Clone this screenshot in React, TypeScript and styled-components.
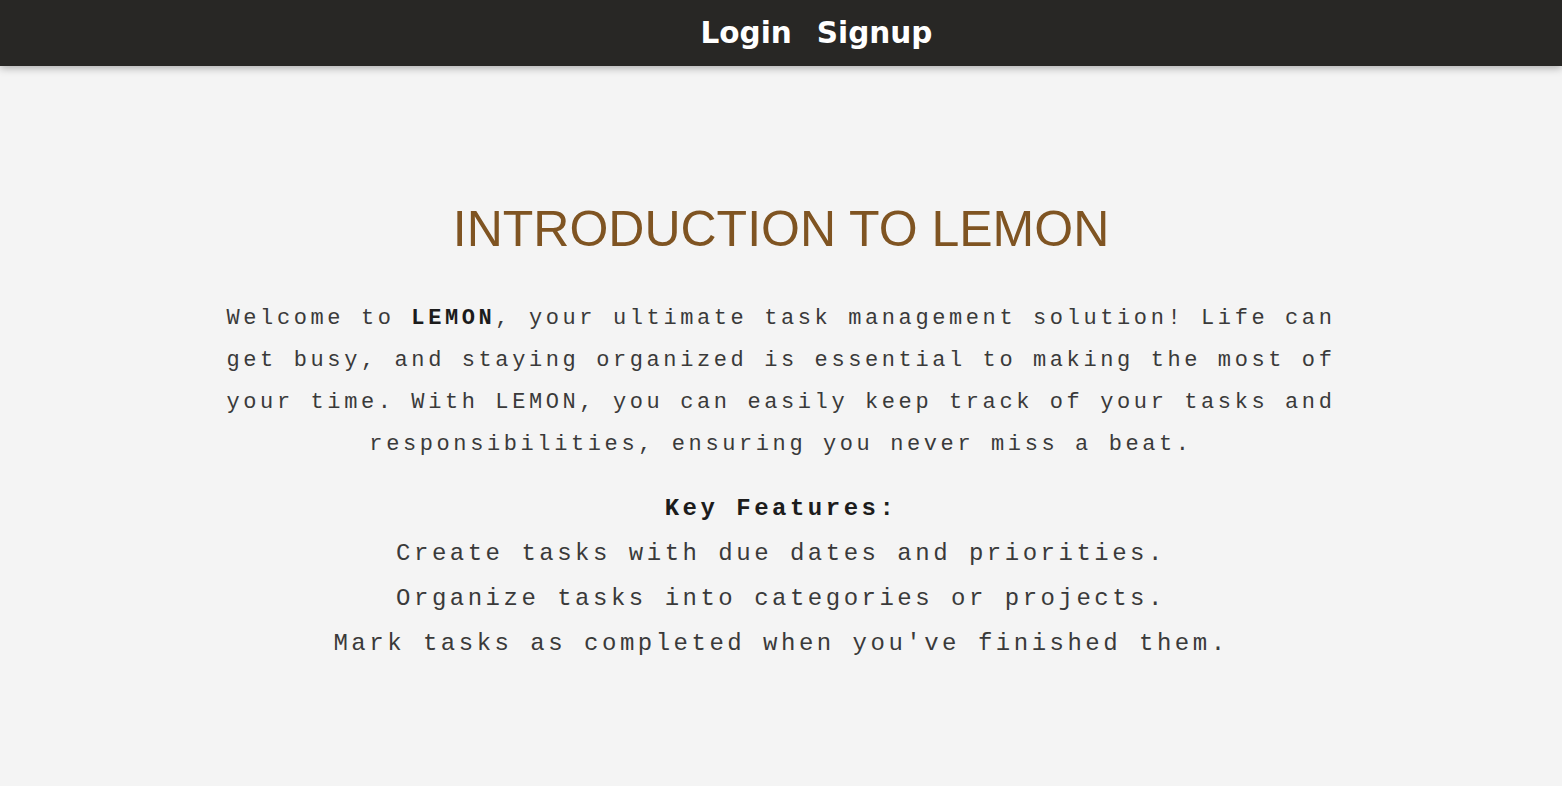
import styled, { createGlobalStyle } from "styled-components";

const GlobalStyle = createGlobalStyle`
  html, body {
    margin: 0;
    padding: 0;
    background: #f4f4f4;
  }
  body {
    min-height: 100vh;
  }
`;

const Page = styled.div`
  min-height: 100vh;
  background: #f4f4f4;
`;

const Header = styled.header`
  height: 66px;
  padding-left: 71px;
  background: #282725;
  box-shadow: 0 2px 8px rgba(0, 0, 0, 0.3);
  display: flex;
  justify-content: center;
  align-items: center;
  gap: 25px;
`;

const NavLink = styled.a`
  font-family: Verdana, "DejaVu Sans", sans-serif;
  font-weight: 700;
  font-size: 29.5px;
  color: #ffffff;
  text-decoration: none;
  cursor: pointer;
`;

const Main = styled.main`
  display: flex;
  flex-direction: column;
  align-items: center;
  padding-top: 134px;
`;

const Title = styled.h1`
  margin: 0;
  font-family: Arial, "Liberation Sans", sans-serif;
  font-weight: 400;
  font-size: 50px;
  line-height: normal;
  color: #7f5422;
`;

const Intro = styled.p`
  margin: 40px 0 0;
  max-width: 1120px;
  text-align: center;
  font-family: "Courier New", "Liberation Mono", monospace;
  font-size: 22px;
  line-height: 42px;
  letter-spacing: 3.6px;
  color: #3a3a3a;

  strong {
    color: #1c1c1c;
  }
`;

const Features = styled.section`
  margin-top: 20px;
  display: flex;
  flex-direction: column;
  align-items: center;
  font-family: "Courier New", "Liberation Mono", monospace;
  font-size: 24px;
  line-height: 45px;
  letter-spacing: 3.5px;
  color: #3a3a3a;
`;

const FeaturesTitle = styled.h2`
  margin: 0;
  font-size: 24px;
  line-height: 45px;
  font-weight: 700;
  color: #1c1c1c;
`;

const FeatureList = styled.ul`
  margin: 0;
  padding: 0;
  list-style: none;
  text-align: center;
`;

const FeatureItem = styled.li``;

const features = [
  "Create tasks with due dates and priorities.",
  "Organize tasks into categories or projects.",
  "Mark tasks as completed when you've finished them.",
];

const App = () => {
  return (
    <Page>
      <GlobalStyle />
      <Header>
        <NavLink>Login</NavLink>
        <NavLink>Signup</NavLink>
      </Header>
      <Main>
        <Title>INTRODUCTION TO LEMON</Title>
        <Intro>
          Welcome to <strong>LEMON</strong>, your ultimate task management
          solution! Life can get busy, and staying organized is essential to
          making the most of your time. With LEMON, you can easily keep track
          of your tasks and responsibilities, ensuring you never miss a beat.
        </Intro>
        <Features>
          <FeaturesTitle>Key Features:</FeaturesTitle>
          <FeatureList>
            {features.map((f) => (
              <FeatureItem key={f}>{f}</FeatureItem>
            ))}
          </FeatureList>
        </Features>
      </Main>
    </Page>
  );
};

export default App;
